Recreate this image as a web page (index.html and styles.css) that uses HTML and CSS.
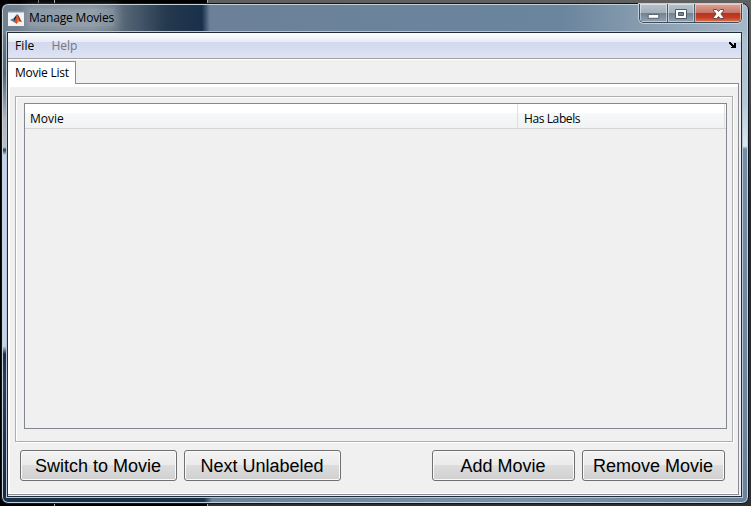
FILE: index.html
```html
<!DOCTYPE html>
<html lang="en">
<head>
<meta charset="utf-8">
<title>Manage Movies</title>
<link rel="stylesheet" href="styles.css">
</head>
<body>
<div class="window">
  <header class="titlebar">
    <svg class="logo" width="16" height="16" viewBox="0 0 16 16">
      <path fill="#f4f4f4" d="M0 0h16v15H0z"/>
      <path fill="#7698bd" d="M0 0h16v1.500H0z"/>
      <path fill="#3d80b5" d="M2 9l4-2 3-2 1 1-4 5-2-1z"/>
      <path fill="#173d65" d="M6 7l3-4-1 5-2 2z"/>
      <path fill="#d74b18" d="M5 11c3-1 3-5 4.500-8 2 2 2 6 4.500 8-3-1-4 0-5.500 2-1-1-1.500-2-3.500-2z"/>
      <path fill="#f5a13a" d="M9 4c1 3 1 6-.5 9 1-1 1.500-2 2.500-2-1-2-1-5-2-7z"/>
      <path fill="#8b2615" d="M9.500 3.500c2 2 3 6 4.500 7.500l-2-1c-1-1-1.500-4-2.500-6.500z"/>
    </svg>
    <span class="title">Manage Movies</span>
    <div class="controls">
      <span class="control min"><svg width="28" height="17" viewBox="0 0 28 17"><path d="M8.500 10.500h11v4h-11z" fill="#fff" stroke="#555c69"/></svg></span>
      <span class="control max"><svg width="26" height="17" viewBox="0 0 26 17"><path fill-rule="evenodd" d="M7.500 5.500h11v9h-11zM10.500 8.500v3h5v-3z" fill="#fff" stroke="#4f5867"/></svg></span>
      <span class="control close"><svg width="46" height="17" viewBox="0 0 46 17"><path d="M18.500 5.500h3.200l1.800 2 1.800-2h3.200v1.300l-2.600 3.200 2.600 3.200v1.300h-3.200l-1.800-2-1.800 2h-3.200v-1.300l2.600-3.200-2.600-3.200z" fill="#fff" stroke="#62464d"/></svg></span>
    </div>
  </header>
  <main class="client">
    <nav class="menu">
      <span class="menu-file">File</span><span class="menu-help">Help</span>
      <svg class="dock" width="7" height="6" viewBox="0 0 7 6"><path d="M0 0h2v1h1v1h1v1h1V1h2v5H2V5h1V4H2V3H1V2H0z"/></svg>
    </nav>
    <div class="tabs"><span class="tab">Movie List</span></div>
    <section class="panel">
      <div class="group">
        <div class="table">
          <div class="thead"><span class="col-movie">Movie</span><span class="col-labels">Has Labels</span></div>
        </div>
      </div>
      <div class="actions">
        <button class="wide">Switch to Movie</button>
        <button class="wide">Next Unlabeled</button>
        <button class="add">Add Movie</button>
        <button>Remove Movie</button>
      </div>
    </section>
  </main>
</div>
</body>
</html>
```
FILE: styles.css
```css
* { box-sizing: border-box; }
body {
  margin: 0;
  width: 751px;
  height: 506px;
  overflow: hidden;
  padding: 3px 2px 2px 1px;
  background:
    linear-gradient(#777, #777) 38px 0 / 1px 5px no-repeat,
    linear-gradient(#aaa, #aaa) 54px 0 / 1px 100% no-repeat,
    linear-gradient(#aaa, #aaa) 207px 0 / 1px 100% no-repeat,
    linear-gradient(90deg, #000 207px, transparent 207px),
    linear-gradient(#606060, #252525 40%, #303030);
  font-family: "Open Sans", "Noto Sans", sans-serif;
  font-size: 12px;
  color: #000;
}
.window {
  height: 501px;
  padding: 0 6px 6px 5px;
  border: 1px solid #10161e;
  border-radius: 7px;
  box-shadow: inset 0 0 0 1px #c5d2dc;
  background:
    linear-gradient(90deg, #71808e 0, #7b8995 90px, #24384e 165px, #19304b 200px, #6c8199 208px, #6b859e 560px, #879daf 640px, #a5b8c9) 0 0 / 100% 31px no-repeat,
    linear-gradient(90deg, #19304a 202px, #6c859d 210px, #7993aa 70%, #6a849d) 0 100% / 100% 7px no-repeat,
    linear-gradient(#7c8996 0, #59626d 70px, #b7b5b8 115px, #c0bec1 143px, #263b54 146px, #c0d5f0 151px, #c1d6ef 342px, #1b2f49 350px, #283e5b 380px, #142940) 0 0 / 7px 100% no-repeat,
    linear-gradient(#a5b8c9 0, #b4c9d7 100px, #dce8ee 142px, #758ea7 145px, #69839c) 100% 0 / 8px 100% no-repeat,
    #6b849c;
}
.titlebar {
  display: flex;
  height: 27px;
  padding: 0 0 0 1px;
}
.logo { margin-top: 7px; }
.title {
  margin: 5px 0 0 5px;
  height: 17px;
  line-height: 17px;
  letter-spacing: -.18px;
  white-space: nowrap;
  background: rgba(220,228,235,.25);
  box-shadow: 0 0 8px 4px rgba(220,228,235,.25);
}
.controls {
  display: flex;
  margin-left: auto;
  height: 19px;
  width: 103px;
  border: 1px solid #3f4a58;
  border-top: 0;
  border-radius: 0 0 5px 5px;
  overflow: hidden;
  box-shadow: 0 0 0 1px #c3d1db;
}
.control {
  display: flex;
  width: 28px;
  border-right: 1px solid #4c5968;
  box-shadow: inset 0 0 0 1px rgba(255,255,255,.45);
  background: linear-gradient(#b7c2cb, #a1afb9 49%, #718292 50%, #8fa3b2);
}
.max { width: 27px; }
.close {
  width: 46px;
  border: 0;
  background: linear-gradient(#d9a598, #c97565 48%, #b13322 50%, #c43d21 75%, #d77a58);
}
.client {
  display: flex;
  flex-direction: column;
  height: 465px;
  margin-top: 1px;
  border: 1px solid #202b39;
  outline: 1px solid #b5c5d1;
  background: #f0f0f0;
}
.menu {
  display: flex;
  align-items: center;
  height: 27px;
  padding: 0 5px 2px 8px;
  border-bottom: 1px solid #fff;
  background:
    linear-gradient(#a1a1a1, #a1a1a1) 0 100% / 100% 1px no-repeat,
    linear-gradient(#fff, #e6ebf5 9px, #d2d8ed 9px, #dfe4f6);
}
.menu-file { margin-left: -1px; letter-spacing: .1px; }
.menu-help { margin-left: 17px; color: #747680; }
.dock { margin-left: auto; }
.tabs {
  display: flex;
  height: 24px;
  padding-top: 1px;
}
.tab {
  width: 68px;
  padding-left: 7px;
  border-top: 1px solid #898c95;
  border-right: 1px solid #898c95;
  background: #fff;
  line-height: 21px;
  letter-spacing: -.24px;
  white-space: nowrap;
}
.tabs::after {
  content: "";
  width: 663px;
  border-bottom: 1px solid #898c95;
}
.panel {
  height: 411px;
  margin-right: 2px;
  padding: 12px 5px 0 7px;
  border-right: 1px solid #898c95;
  border-bottom: 1px solid #898c95;
  background:
    linear-gradient(#fff, #fff) 0 0 / 100% 3px no-repeat,
    linear-gradient(#fff, #fff) 0 0 / 2px 100% no-repeat,
    linear-gradient(#fff, #fff) 0 100% / 100% 1px no-repeat,
    #f0f0f0;
}
.group {
  height: 346px;
  padding: 6px 5px 12px 8px;
  border: 1px solid #aeaeae;
  box-shadow: inset 1px 1px #fff, 1px 1px #fff;
}
.table {
  height: 326px;
  border: 1px solid #828790;
}
.thead {
  display: flex;
  height: 25px;
  border-bottom: 1px solid #d5d5d5;
  background: linear-gradient(#fff 9px, #f7f8fa 9px, #f1f2f4);
  line-height: 29px;
}
.col-movie {
  width: 493px;
  padding-left: 5px;
  border-right: 1px solid #dfe0e2;
}
.col-labels {
  flex: 1;
  margin-right: 1px;
  padding-left: 6px;
  border-right: 1px solid #dfe0e2;
  letter-spacing: -.4px;
}
.actions {
  display: flex;
  gap: 7px;
  padding: 8px 8px 0 5px;
}
button {
  width: 143px;
  height: 31px;
  padding: 1px 1px 0 0;
  border: 1px solid #707070;
  border-radius: 3px;
  box-shadow: inset 0 0 0 1px #fafafa;
  background: linear-gradient(#f2f2f2, #ebebeb 49%, #dddddd 50%, #cfcfcf);
  font: 18px/28px "Liberation Sans", sans-serif;
  color: #000;
  white-space: nowrap;
}
.wide { width: 157px; }
.add { margin-left: auto; }
```
